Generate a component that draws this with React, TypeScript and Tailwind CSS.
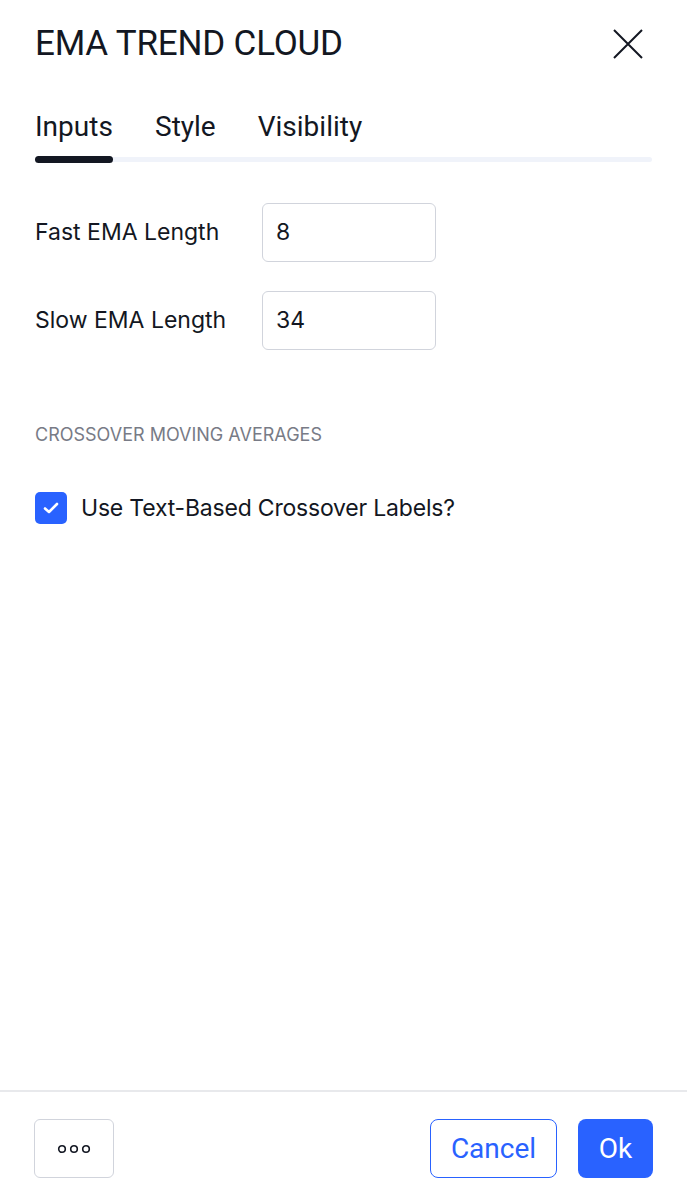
import { useState } from 'react';

const Field = ({ label, value }: { label: string; value: string }) => (
  <div className="flex items-center h-[59px]">
    <span className="w-[227px] text-[23px] text-[#131722]" style={{ fontFamily: 'Inter, sans-serif' }}>{label}</span>
    <div className="w-[174px] h-[59px] rounded-[6px] border border-[#d1d4dc] flex items-center px-[13px]">
      <span className="text-[23px] text-[#131722]" style={{ fontFamily: 'Inter, sans-serif' }}>{value}</span>
    </div>
  </div>
);

export default function App() {
  const [checked, setChecked] = useState(true);
  return (
    <div className="w-[687px] h-[1200px] bg-white flex flex-col" style={{ fontFamily: 'Roboto, sans-serif' }}>
      {/* header */}
      <div className="flex items-center justify-between pl-[35px] pr-[44px] pt-[11px] h-[77px]">
        <h1 className="text-[35px] text-[#131722] tracking-[-0.2px]">EMA TREND CLOUD</h1>
        <button className="w-[30px] h-[30px] flex items-center justify-center">
          <svg width="30" height="30" viewBox="0 0 30 30" fill="none" stroke="#131722" strokeWidth="2">
            <path d="M1 1 L29 29 M29 1 L1 29" />
          </svg>
        </button>
      </div>

      {/* tabs */}
      <div className="px-[35px] mt-[25px]">
        <div className="flex gap-[42px] text-[28px] text-[#131722] h-[46px] items-end">
          <span className="w-[77px]">Inputs</span>
          <span className="ml-[1px]">Style</span>
          <span>Visibility</span>
        </div>
        <div className="relative mt-[8px] h-[6px] flex items-center">
          <div className="w-full h-[5px] rounded-full bg-[#f0f3fa]" />
          <div className="absolute left-0 top-0 w-[78px] h-[7px] rounded-full bg-[#131722]" />
        </div>
      </div>

      {/* inputs */}
      <div className="px-[35px] mt-[41px] flex flex-col gap-[29px]">
        <Field label="Fast EMA Length" value="8" />
        <Field label="Slow EMA Length" value="34" />
      </div>

      <div className="px-[35px] mt-[71px] text-[18px] text-[#787b86]" style={{ fontFamily: 'Inter, sans-serif' }}>
        CROSSOVER MOVING AVERAGES
      </div>

      <label className="px-[35px] mt-[43px] flex items-center gap-[14px] cursor-pointer" style={{ fontFamily: 'Inter, sans-serif' }}>
        <span
          onClick={() => setChecked(!checked)}
          className={`w-[32px] h-[32px] rounded-[5px] flex items-center justify-center ${checked ? 'bg-[#2962ff]' : 'border border-[#d1d4dc]'}`}
        >
          {checked && (
            <svg width="18" height="18" viewBox="0 0 18 18" fill="none" stroke="white" strokeWidth="2.6" strokeLinecap="round" strokeLinejoin="round">
              <path d="M3 9.5 L7 13 L15 5" />
            </svg>
          )}
        </span>
        <span className="text-[23px] text-[#131722] tracking-[-0.2px]">Use Text-Based Crossover Labels?</span>
      </label>

      <div className="flex-1" />

      {/* footer */}
      <div className="border-t-2 border-[#e8e9ec] h-[110px] flex items-start justify-between px-[34px] pt-[27px]">
        <button className="w-[80px] h-[59px] rounded-[6px] border border-[#d1d4dc] flex items-center justify-center">
          <svg width="34" height="10" viewBox="0 0 34 10" fill="none" stroke="#131722" strokeWidth="1.6">
            <circle cx="5" cy="5" r="3.3" />
            <circle cx="17" cy="5" r="3.3" />
            <circle cx="29" cy="5" r="3.3" />
          </svg>
        </button>
        <div className="flex gap-[21px]">
          <button className="w-[127px] h-[59px] rounded-[8px] border border-[#2962ff] text-[#2962ff] text-[28px]">Cancel</button>
          <button className="w-[75px] h-[59px] rounded-[8px] bg-[#2962ff] text-white text-[28px]">Ok</button>
        </div>
      </div>
    </div>
  );
}
